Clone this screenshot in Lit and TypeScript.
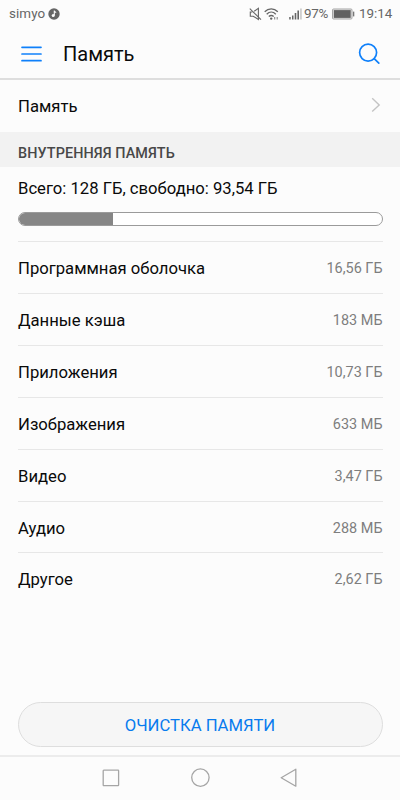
import { LitElement, html, css } from "lit";
import { customElement, property } from "lit/decorators.js";

interface Usage {
  label: string;
  value: string;
}

const USAGE: Usage[] = [
  { label: "Программная оболочка", value: "16,56 ГБ" },
  { label: "Данные кэша", value: "183 МБ" },
  { label: "Приложения", value: "10,73 ГБ" },
  { label: "Изображения", value: "633 МБ" },
  { label: "Видео", value: "3,47 ГБ" },
  { label: "Аудио", value: "288 МБ" },
  { label: "Другое", value: "2,62 ГБ" },
];

@customElement("status-bar")
class StatusBar extends LitElement {
  static styles = css`
    :host {
      display: flex;
      align-items: center;
      height: 28px;
      box-sizing: border-box;
      padding: 0 8px 1px 9px;
      color: #666;
      font-size: 13.4px;
      line-height: 28px;
      white-space: nowrap;
    }
    svg { display: block; flex: none; }
    .name { width: 36px; letter-spacing: 0.1px; }
    .note { margin-left: 3px; }
    .mute { margin-left: auto; }
    .wifi { margin-left: 2px; }
    .signal { margin-left: 9px; }
    .percent { margin-left: 2px; width: 25px; letter-spacing: -0.3px; }
    .battery { margin-left: 3px; }
    .time { margin-left: 4px; width: 33px; }
  `;

  render() {
    return html`
      <span class="name">simyo</span>
      <svg class="note" width="12" height="12" viewBox="0 0 12 12">
        <circle cx="6" cy="6" r="5.7" fill="#666" />
        <path d="M6.3 2.6v4.9M6.3 3.2l1.8 1.5" fill="none" stroke="#fcfcfc" stroke-width="1.1" />
        <circle cx="5.2" cy="7.6" r="1.5" fill="#fcfcfc" />
      </svg>
      <svg class="mute" width="13" height="14" viewBox="0 0 13 14" fill="none" stroke="#666" stroke-width="1.1">
        <path d="M5.2 4.2L9.4 1.4v11L4.2 9.2H1.3V5h2" />
        <path d="M.8 1.6l11.2 11" />
      </svg>
      <svg class="wifi" width="16" height="14" viewBox="0 0 16 14" fill="none" stroke="#666" stroke-width="1.3">
        <path d="M.7 4.7C4.5.9 10 .9 13.8 4.7M2.7 7.2c2.7-2.7 6.4-2.7 9.1 0M4.8 9.6c1.5-1.4 3.4-1.4 4.9 0" />
        <circle cx="7.2" cy="11.6" r="1.2" fill="#666" stroke="none" />
        <path d="M10.7 10v2.6M13.2 10v2.6" stroke="#888" stroke-width="1.1" />
      </svg>
      <svg class="signal" width="13" height="12" viewBox="0 0 13 12">
        <path d="M.2 9h1.5v2.5H.2zM3 7.4h1.5v4.1H3zM5.7 5h1.6v6.5H5.7zM8.4 2.5H10v9H8.4z" fill="#666" />
        <path d="M11.2.5h1.5v11h-1.5z" fill="#c4c4c4" />
      </svg>
      <span class="percent">97%</span>
      <svg class="battery" width="23" height="12" viewBox="0 0 23 12">
        <rect x=".5" y="1" width="19.5" height="10" rx="1" fill="#e4e4e4" stroke="#a5a5a5" />
        <rect x="1.8" y="2.1" width="16.9" height="7.8" fill="#616161" />
        <path d="M21.6 3.6v4.8" stroke="#777" stroke-width="1.4" />
      </svg>
      <span class="time">19:14</span>
    `;
  }
}

@customElement("usage-row")
class UsageRow extends LitElement {
  @property() label = "";
  @property() value = "";

  static styles = css`
    :host {
      display: flex;
      align-items: center;
      justify-content: space-between;
      height: 51.85px;
      box-sizing: border-box;
      border-top: 1px solid #e7e7e7;
      padding-top: 2px;
    }
    .label { font-size: 16.67px; color: #0a0a0a; }
    .value { font-size: 14.45px; color: #7e7e7e; }
  `;

  render() {
    return html`<span class="label">${this.label}</span><span class="value">${this.value}</span>`;
  }
}

@customElement("app-root")
class AppRoot extends LitElement {
  static styles = css`
    :host {
      display: flex;
      flex-direction: column;
      width: 400px;
      height: 800px;
      overflow: hidden;
      background: #fcfcfc;
      color: #0a0a0a;
      font-family: Roboto, "Liberation Sans", sans-serif;
      font-size: 16.67px;
    }
    svg { display: block; flex: none; }
    .header {
      display: flex;
      align-items: center;
      height: 52px;
      box-sizing: border-box;
      padding: 1px 20px 0 21px;
      border-bottom: 2px solid #dedede;
      flex: none;
    }
    .title {
      flex: 1;
      margin: 1px 0 0 21px;
      font-size: 20px;
      font-weight: 400;
    }
    .link {
      display: flex;
      align-items: center;
      justify-content: space-between;
      height: 52px;
      box-sizing: border-box;
      padding: 0 19px 0 18px;
      flex: none;
    }
    .chevron { margin-bottom: 2px; }
    .section {
      height: 35px;
      box-sizing: border-box;
      padding: 4px 18px 0;
      background: #f2f2f2;
      color: #484848;
      font-size: 14.4px;
      letter-spacing: 0.1px;
      font-weight: 500;
      line-height: 35px;
      flex: none;
    }
    .storage { padding: 0 17.5px 0 18px; flex: 1; }
    .summary { height: 45px; line-height: 44px; }
    .meter {
      height: 14px;
      box-sizing: border-box;
      border: 1px solid #9b9b9b;
      border-radius: 7px;
      overflow: hidden;
      background: #fff;
      margin-bottom: 15.4px;
    }
    .used { height: 100%; background: #868686; }
    .clean {
      height: 45px;
      box-sizing: border-box;
      margin: 0 17.5px 8px;
      border: 1px solid #dedede;
      border-radius: 23px;
      background: #f6f6f6;
      color: #087bee;
      font: inherit;
      padding: 1px 0 0;
      flex: none;
    }
    .nav {
      display: flex;
      justify-content: center;
      align-items: center;
      gap: 70px;
      height: 45px;
      box-sizing: border-box;
      padding: 0 0 1px;
      border-top: 2px solid #ececec;
      flex: none;
    }
  `;

  render() {
    return html`
      <status-bar></status-bar>
      <header class="header">
        <svg width="21" height="18" viewBox="0 0 21 18" stroke="#0f80fa" stroke-width="1.7" stroke-linecap="round">
          <path d="M1 2.3h19M1 9h19M1 15.7h19" />
        </svg>
        <h1 class="title">Память</h1>
        <svg width="22" height="22" viewBox="0 0 22 22" fill="none" stroke="#0f80fa" stroke-width="1.7" stroke-linecap="round">
          <circle cx="10.1" cy="9.6" r="8.5" />
          <path d="M16.2 15.6l4.6 4.5" />
        </svg>
      </header>
      <div class="link">
        <span>Память</span>
        <svg class="chevron" width="10" height="16" viewBox="0 0 10 16" fill="none" stroke="#c4c4c4" stroke-width="1.4">
          <path d="M1.2 1.2l7 6.7-7 6.7" />
        </svg>
      </div>
      <div class="section">ВНУТРЕННЯЯ ПАМЯТЬ</div>
      <div class="storage">
        <div class="summary">Всего: 128 ГБ, свободно: 93,54 ГБ</div>
        <div class="meter"><div class="used" style="width: 26%"></div></div>
        ${USAGE.map((u) => html`<usage-row .label=${u.label} .value=${u.value}></usage-row>`)}
      </div>
      <button class="clean">ОЧИСТКА ПАМЯТИ</button>
      <nav class="nav">
        <svg width="18" height="18" viewBox="0 0 18 18" fill="none" stroke="#a5a5a5" stroke-width="1.3">
          <rect x="1.2" y="1.2" width="15.4" height="15.4" rx=".6" />
        </svg>
        <svg width="20" height="20" viewBox="0 0 20 20" fill="none" stroke="#a5a5a5" stroke-width="1.3">
          <circle cx="10.4" cy="9.6" r="8.7" />
        </svg>
        <svg width="18" height="20" viewBox="0 0 18 20" fill="none" stroke="#a5a5a5" stroke-width="1.3" stroke-linejoin="round">
          <path d="M15.8 1.2v17L1.2 9.7z" />
        </svg>
      </nav>
    `;
  }
}
